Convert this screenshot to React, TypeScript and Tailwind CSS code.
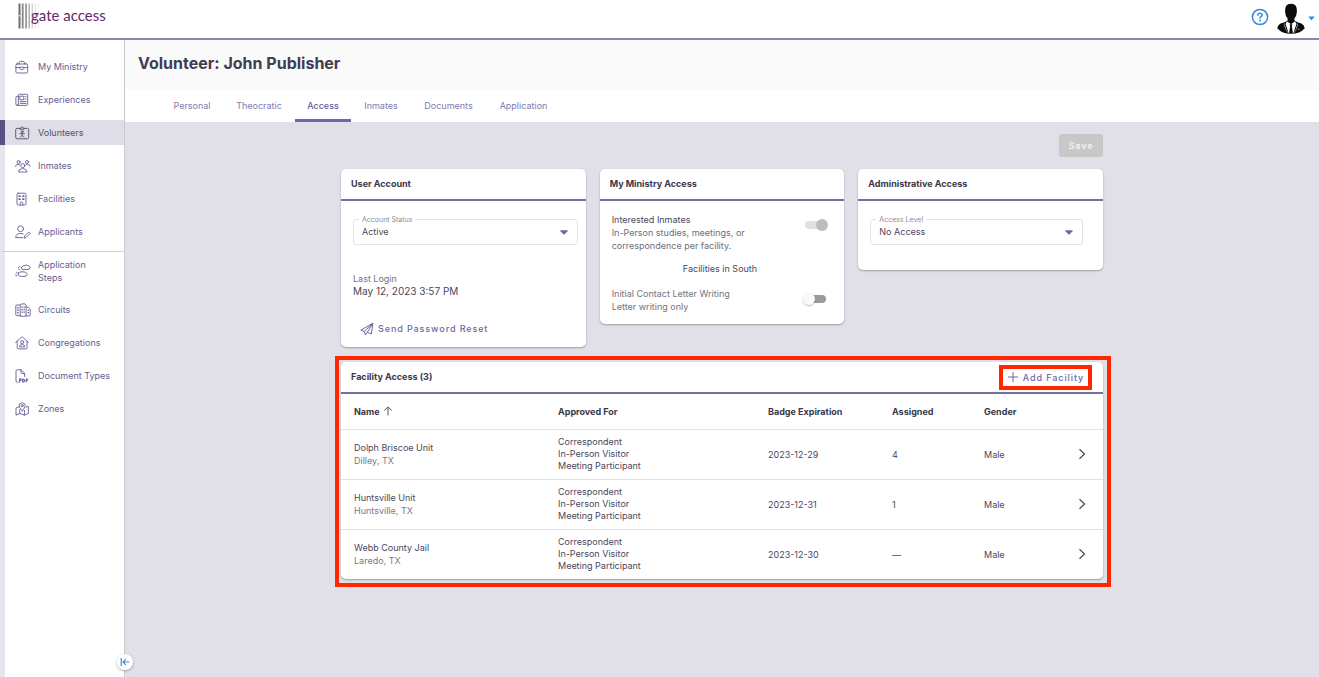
import React from "react";

type IconProps = { children: React.ReactNode };

function Icon({ children }: IconProps) {
  return (
    <svg
      viewBox="0 0 16 16"
      className="size-4 shrink-0"
      fill="none"
      stroke="currentColor"
      strokeWidth="0.9"
      strokeLinecap="round"
      strokeLinejoin="round"
      aria-hidden="true"
    >
      {children}
    </svg>
  );
}

const icons = {
  ministry: (
    <Icon>
      <rect x="0.9" y="5" width="11.8" height="9" rx="1.2" />
      <path d="M4.2 5V3.6Q4.2 2.4 5.4 2.4H8.2Q9.4 2.4 9.4 3.6V5M2.4 5V4.2M11.2 5V4.2M0.9 8.6H4.8M8.8 8.6H12.7M4.8 8.2H8.8V9.3Q8.4 10.8 6.8 10.8Q5.2 10.8 4.8 9.3Z" />
    </Icon>
  ),
  experiences: (
    <Icon>
      <path d="M3.4 12.2V3.2Q3.4 2.3 4.3 2.3H11.8Q12.7 2.3 12.7 3.2V12.2Q12.7 13.4 11.5 13.4H2.3Q0.9 13.4 0.9 12V5.4Q0.9 4.4 1.9 4.4H3.4M2.3 13.4Q3.4 13.4 3.4 12.2" />
      <rect x="5.2" y="4.2" width="3.6" height="3.6" />
      <path d="M10.2 4.6H11M10.2 7H11M5.2 9.6H11M5.2 11.4H11" />
    </Icon>
  ),
  volunteers: (
    <Icon>
      <path d="M5.3 3.4H2Q0.7 3.4 0.7 4.7V12.5Q0.7 13.8 2 13.8H12.4Q13.7 13.8 13.7 12.5V4.7Q13.7 3.4 12.4 3.4H9.1M5.3 4.2H9.1V3.1H8.2Q8 1.9 7.2 1.9Q6.4 1.9 6.2 3.1H5.3Z" />
      <circle cx="7.2" cy="6.7" r="1" />
      <path d="M4.9 8.7H9.5M7.2 8.5V10.3M5.4 12.2L7.2 10.3L9 12.2" />
    </Icon>
  ),
  inmates: (
    <Icon>
      <circle cx="3.6" cy="4" r="1.5" />
      <circle cx="12" cy="4" r="1.5" />
      <circle cx="7.8" cy="7.6" r="2" />
      <path d="M0.5 8.3Q0.8 6.3 3.2 6.3Q4.2 6.3 4.8 6.9M15.1 8.3Q14.8 6.3 12.4 6.3Q11.4 6.3 10.8 6.9M3.5 13.6Q3.8 10.6 7.8 10.6Q11.8 10.6 12.1 13.6Z" />
    </Icon>
  ),
  facilities: (
    <Icon>
      <rect x="2" y="2.2" width="9" height="11.8" rx="1.2" />
      <path d="M5.2 14V12.2Q5.2 10.9 6.5 10.9Q7.8 10.9 7.8 12.2V14" />
      <path strokeWidth="1.4" d="M4.6 5V5.4M8.4 5V5.4M4.6 8V8.4M8.4 8V8.4" />
      <path d="M3.6 5.2H5.6M7.4 5.2H9.4M3.6 8.2H5.6M7.4 8.2H9.4" />
    </Icon>
  ),
  applicants: (
    <Icon>
      <circle cx="5.6" cy="4.8" r="2.9" />
      <path d="M8 13.6H0.7Q0.9 9.4 5.6 9.4Q7 9.4 8 9.9M9.4 13.8L9.8 11.8L13.2 8.4Q14 7.9 14.7 8.5Q15.2 9.2 14.6 9.9L11.3 13.2Z" />
    </Icon>
  ),
  steps: (
    <Icon>
      <path d="M6.4 4.4Q7.6 1.8 11.8 2.1Q15.2 2.7 15.1 4.6Q14.8 6.6 12 6.6Q9.8 6.2 8 6.6Q5.8 6.3 6.4 4.4ZM3.4 4.2Q4.2 3.1 5 3.5M3.6 6.2H4.8M3.2 9.8Q4.4 8.6 8 8.8Q12.2 9 12.1 11.4Q11.7 13.6 9 13.6Q6.8 13 5 13.3Q2.4 12.8 3.2 9.8ZM0.7 10.4Q1.1 9.7 1.8 9.9M0.8 12.6H1.8" />
    </Icon>
  ),
  circuits: (
    <Icon>
      <path d="M5.2 3H1.8Q0.8 3 0.8 4V12.8Q0.8 13.6 1.8 13.6H5.2M5.2 13.9V3.2L6.4 1.9H10L11.1 3.2V13.9ZM11.1 5.2H13.3L15.2 7V13.2Q15.2 13.9 14.4 13.9H11.1" />
      <path strokeDasharray="1.4 1.1" strokeWidth="1.4" strokeLinecap="butt" d="M2.9 5V12M7.1 4.4V12M9.2 4.4V12M13.2 7.4V12.6" />
    </Icon>
  ),
  congregations: (
    <Icon>
      <path d="M0.7 7.4L6.9 2Q7.2 1.8 7.5 2L13.4 7.4M2.2 6.2V12.8Q2.2 13.9 3.3 13.9H11Q12 13.9 12 12.8V6.2" />
      <circle cx="7.1" cy="7.1" r="1.6" />
      <path d="M4.4 11.5Q4.6 9.5 7.1 9.5Q9.6 9.5 9.8 11.5Z" />
    </Icon>
  ),
  documents: (
    <Icon>
      <path d="M3 14.2H2.2Q1 14.2 1 13V3Q1 1.8 2.2 1.8H6.3L9.6 5.3V8.6M6 2V4.6Q6 5.6 7 5.6H9.4" />
      <path strokeWidth="1.1" d="M4.6 14V10.9H5.3Q6.3 11 6.2 11.9Q6 12.7 4.6 12.6M7.7 11V14Q9.6 14 9.5 12.5Q9.5 11 7.7 11M11.2 14V11H12.8M11.2 12.5H12.4" />
    </Icon>
  ),
  zones: (
    <Icon>
      <path d="M3.9 5.8L1 7V14.1L4.8 12.6L9.4 14.1L13.4 12.6V5.3L11 6.1M4.8 12.6V8.6M9.4 14.1V9.4M7.2 9.7Q4.1 6.6 4.1 4.7Q4.2 1.9 7.2 1.8Q10.2 1.9 10.3 4.7Q10.3 6.6 7.2 9.7Z" />
      <circle cx="7.2" cy="4.7" r="1.1" />
    </Icon>
  ),
};

const primaryNav = [
  { label: "My Ministry", icon: icons.ministry },
  { label: "Experiences", icon: icons.experiences },
  { label: "Volunteers", icon: icons.volunteers, active: true },
  { label: "Inmates", icon: icons.inmates },
  { label: "Facilities", icon: icons.facilities },
  { label: "Applicants", icon: icons.applicants },
];

const adminNav = [
  { label: "Circuits", icon: icons.circuits },
  { label: "Congregations", icon: icons.congregations },
  { label: "Document Types", icon: icons.documents },
  { label: "Zones", icon: icons.zones },
];

const tabs = [
  { label: "Personal", width: "w-[62px]" },
  { label: "Theocratic", width: "w-[72px]" },
  { label: "Access", width: "w-[56px]", active: true },
  { label: "Inmates", width: "w-[60px]" },
  { label: "Documents", width: "w-[75px]" },
  { label: "Application", width: "w-[75px]" },
];

const facilities = [
  { name: "Dolph Briscoe Unit", city: "Dilley, TX", badge: "2023-12-29", assigned: "4" },
  { name: "Huntsville Unit", city: "Huntsville, TX", badge: "2023-12-31", assigned: "1" },
  { name: "Webb County Jail", city: "Laredo, TX", badge: "2023-12-30", assigned: "—" },
];

function NavLink({ label, icon, active }: { label: string; icon: React.ReactNode; active?: boolean }) {
  return (
    <a
      href="#"
      aria-current={active ? "page" : undefined}
      className={
        active
          ? "-ml-[5px] flex min-h-[25px] items-center gap-[7px] border-l-[5px] border-[#5d5085] bg-[#dfdde7] pl-[10px] text-[#55506b]"
          : "flex min-h-[25px] items-center gap-[7px] pl-[10px]"
      }
    >
      {icon}
      <span>{label}</span>
    </a>
  );
}

function Card({ title, action, children }: { title: string; action?: React.ReactNode; children: React.ReactNode }) {
  return (
    <section className="rounded-[5px] bg-white shadow-[0_1px_2px_rgba(0,0,0,0.3)]">
      <header className="flex h-8 items-center justify-between border-b-2 border-[#776e9f] pl-[10px]">
        <h2 className="text-[9px] leading-3 font-bold text-[#3a3749]">{title}</h2>
        {action}
      </header>
      {children}
    </section>
  );
}

function SelectField({ id, label, value }: { id: string; label: string; value: string }) {
  return (
    <div className="relative">
      <label htmlFor={id} className="absolute -top-[5px] left-[6px] bg-white px-[3px] text-[7px] leading-[12px] text-[#8d8a9c]">
        {label}
      </label>
      <select
        id={id}
        defaultValue={value}
        className="block h-[26px] w-full appearance-none rounded-[3px] border border-[#e4e4e7] bg-white pb-[2px] pl-2 text-[9px] text-[#4a475c]"
      >
        <option>{value}</option>
      </select>
      <svg viewBox="0 0 8 5" className="pointer-events-none absolute top-[11px] right-[10px] h-[5px] w-2" aria-hidden="true">
        <path d="M0.6 0.3H7.4Q8 0.6 7.5 1.2L4.6 4.3Q4 4.8 3.4 4.3L0.5 1.2Q0 0.6 0.6 0.3Z" fill="#6b68a8" />
      </svg>
    </div>
  );
}

function Toggle({ id, on }: { id: string; on?: boolean }) {
  return (
    <span className="relative mt-[6px] flex h-3 w-[25px] shrink-0 items-center">
      <input id={id} type="checkbox" role="switch" defaultChecked={on} className="absolute inset-0 m-0 opacity-0" />
      <span className={on ? "ml-[2px] h-2 w-5 rounded-full bg-[#e0e0e0]" : "ml-[5px] h-2 w-[18px] rounded-full bg-[#9b9b9b]"} />
      <span
        className={
          on
            ? "absolute right-0 size-3 rounded-full bg-[#bdbdbd]"
            : "absolute left-0 size-3 rounded-full bg-[#fafafa] shadow-[0_1px_2px_rgba(0,0,0,0.25)]"
        }
      />
    </span>
  );
}

function Logo() {
  return (
    <a href="#" className="flex items-start" aria-label="gate access">
      <svg viewBox="0 0 24 26" className="-mr-[11px] h-[26px] w-6" aria-hidden="true">
        <rect x="0.5" y="0.5" width="2" height="25" fill="#6f6f73" />
        <rect x="3.8" y="0.5" width="1.8" height="25" fill="#87878b" />
        <rect x="7.2" y="0.5" width="1.8" height="25" fill="#9a9a9e" />
        <rect x="10.4" y="0.5" width="1.6" height="25" fill="#b4b4b8" />
        <rect x="13.6" y="0.5" width="1.4" height="25" fill="#cfcfd2" />
        <rect x="16.8" y="0.5" width="1.2" height="25" fill="#e4e4e6" />
        <rect x="19.8" y="0.5" width="1" height="25" fill="#f1f1f2" />
        <circle cx="1.4" cy="12.8" r="0.8" fill="#fff" />
      </svg>
      <span className="font-['Lato',sans-serif] text-[15px] leading-[25px] text-[#642a6d]">gate access</span>
    </a>
  );
}

export default function App() {
  return (
    <div className="flex min-h-screen flex-col bg-[#e1dfe8] font-['Inter',sans-serif] text-[9px] leading-[13px] text-[#4a475c]">
      <header className="flex h-10 items-start justify-between border-b-2 border-[#8b86ae] bg-white pr-1 pl-[18px]">
        <div className="pt-[3px]">
          <Logo />
        </div>
        <div className="flex items-start pt-[3px]">
          <button type="button" aria-label="Help" className="mt-[5px] mr-[7px]">
            <svg viewBox="0 0 18 18" className="size-[18px]" fill="none" stroke="#2f8be0" aria-hidden="true">
              <circle cx="9" cy="9" r="7.6" strokeWidth="1.5" />
              <path d="M6.9 7.3Q6.9 5.3 9 5.3Q11.2 5.3 11.1 7.1Q11 8.1 9.9 8.7Q9 9.2 9 10.2" strokeWidth="1.5" strokeLinecap="round" />
              <circle cx="9" cy="12.5" r="0.9" fill="#2f8be0" stroke="none" />
            </svg>
          </button>
          <button type="button" aria-label="Account" className="flex items-center">
            <svg viewBox="0 0 30 31" className="h-[31px] w-[30px]" aria-hidden="true">
              <path d="M9.1 9Q8.4 0.8 15 0.8Q21.6 0.8 20.9 9Q20.6 13 18.4 15.4V17.4Q21 19.4 25.4 20.6Q28 21.8 28.8 25.2Q24 30.7 15 30.7Q6 30.7 1.2 25.2Q2 21.8 4.6 20.6Q9 19.4 11.6 17.4V15.4Q9.4 13 9.1 9Z" fill="#0b0b0d" />
              <path d="M10.9 18.2L15 21.2L19.1 18.2L20.4 21L17.4 30H12.6L9.6 21Z" fill="#fff" />
              <path d="M13.5 21.3H16.5L15.8 23L16.9 30H13.1L14.2 23Z" fill="#0b0b0d" />
              <path d="M8.8 20.4L8.2 23.2L10 24L9 25L12.2 30M21.2 20.4L21.8 23.2L20 24L21 25L17.8 30M21.8 26.3H24" fill="none" stroke="#c9c9cc" strokeWidth="0.6" />
            </svg>
            <svg viewBox="0 0 7 5" className="ml-[2px] h-[5px] w-[7px]" aria-hidden="true">
              <path d="M0.3 0.4H6.7L3.5 4.4Z" fill="#2f8be0" />
            </svg>
          </button>
        </div>
      </header>

      <div className="flex flex-1">
        <aside className="relative w-[125px] shrink-0 border-r border-l-[5px] border-r-[#c9c8cf] border-l-[#e6e5ec] bg-white pt-[14px] text-[#665c92]">
          <nav aria-label="Main">
            <div className="flex flex-col gap-2">
              {primaryNav.map((item) => (
                <NavLink key={item.label} {...item} />
              ))}
            </div>
            <div className="mt-[7px] -ml-[3px] border-t border-[#cfcfd4]" />
            <a href="#" className="mb-[7px] flex h-[38px] items-center gap-[7px] pl-[10px]">
              {icons.steps}
              <span>
                Application
                <br />
                Steps
              </span>
            </a>
            <div className="flex flex-col gap-2">
              {adminNav.map((item) => (
                <NavLink key={item.label} {...item} />
              ))}
            </div>
          </nav>
          <button
            type="button"
            aria-label="Collapse menu"
            className="absolute -right-[9px] bottom-[7px] z-10 flex size-4 items-center justify-center rounded-full bg-white shadow-[0_1px_3px_rgba(0,0,0,0.3)]"
          >
            <svg viewBox="0 0 10 10" className="size-[10px]" fill="none" stroke="#3b8fe0" strokeWidth="1.2" aria-hidden="true">
              <path d="M1.2 1V9M9.4 5H3.2M5.8 2.2L3 5L5.8 7.8" />
            </svg>
          </button>
        </aside>

        <main className="min-w-0 flex-1">
          <div className="h-[50px] bg-[#fafafa] pt-[13px] pl-[13px]">
            <h1 className="text-[16px] leading-[20px] font-bold text-[#3f3d50]">Volunteer: John Publisher</h1>
          </div>
          <nav aria-label="Volunteer sections" className="flex h-8 bg-white pl-9">
            {tabs.map((tab) => (
              <a
                key={tab.label}
                href="#"
                aria-current={tab.active ? "page" : undefined}
                className={`${tab.width} flex items-center justify-center border-b-[3px] pt-[1px] ${
                  tab.active ? "border-[#6b68b0] font-medium text-[#625f9f]" : "border-transparent text-[#7f7cb0]"
                }`}
              >
                {tab.label}
              </a>
            ))}
          </nav>

          <div className="mx-auto max-w-[762px] pt-3">
            <div className="flex justify-end">
              <button type="button" disabled className="h-[23px] w-11 rounded-[3px] bg-[#c8c8c8] font-semibold tracking-widest text-[#f3f3f3]">
                Save
              </button>
            </div>

            <div className="mt-3 grid grid-cols-3 items-start gap-[14px]">
              <Card title="User Account">
                <div className="pt-[18px] pr-2 pb-[6px] pl-3">
                  <SelectField id="account-status" label="Account Status" value="Active" />
                  <dl className="mt-[27px]">
                    <dt className="text-[#75737d]">Last Login</dt>
                    <dd className="text-[10px] leading-3">May 12, 2023 3:57 PM</dd>
                  </dl>
                  <button type="button" className="mt-[19px] ml-[7px] flex h-[25px] items-center gap-1 font-medium tracking-widest text-[#6b68a5]">
                    <svg viewBox="0 0 14 14" className="size-[14px]" fill="none" stroke="currentColor" strokeLinejoin="round" aria-hidden="true">
                      <path d="M0.8 8.2L12.9 1.2L11.3 12L7.3 10.2L5.5 12.9L4.3 9.4ZM4.3 9.4L12.9 1.2L7.3 10.2" />
                    </svg>
                    Send Password Reset
                  </button>
                </div>
              </Card>

              <Card title="My Ministry Access">
                <div className="pt-3 pr-4 pb-[11px] pl-3">
                  <div className="flex items-start justify-between">
                    <label htmlFor="interested-inmates" className="text-[#6f6d78]">
                      <span className="text-[#4a475c]">Interested Inmates</span>
                      <br />
                      In-Person studies, meetings, or
                      <br />
                      correspondence per facility.
                    </label>
                    <Toggle id="interested-inmates" on />
                  </div>
                  <p className="mt-[10px] text-center">Facilities in South</p>
                  <div className="mt-3 flex items-start justify-between">
                    <label htmlFor="letter-writing" className="text-[#75737d]">
                      Initial Contact Letter Writing
                      <br />
                      Letter writing only
                    </label>
                    <Toggle id="letter-writing" />
                  </div>
                </div>
              </Card>

              <Card title="Administrative Access">
                <div className="pt-[18px] pr-5 pb-[25px] pl-3">
                  <SelectField id="access-level" label="Access Level" value="No Access" />
                </div>
              </Card>
            </div>

            <div className="relative mt-[15px]">
              <Card
                title="Facility Access (3)"
                action={
                  <button
                    type="button"
                    className="mr-[11px] flex h-[25px] w-[93px] items-center justify-center gap-1 border-4 border-[#ff2600] font-medium tracking-widest text-[#6b68a5]"
                  >
                    <svg viewBox="0 0 12 12" className="size-3 shrink-0" fill="none" stroke="currentColor" aria-hidden="true">
                      <path d="M6 1V11M1 6H11" />
                    </svg>
                    <span className="whitespace-nowrap">Add Facility</span>
                  </button>
                }
              >
                <table className="w-full table-fixed border-collapse text-left">
                  <colgroup>
                    <col className="w-[217px]" />
                    <col className="w-[210px]" />
                    <col className="w-[124px]" />
                    <col className="w-[92px]" />
                    <col />
                    <col className="w-[25px]" />
                  </colgroup>
                  <thead>
                    <tr className="h-[35px] text-[#3a3749]">
                      <th className="pl-[13px] font-bold">
                        <span className="flex items-center gap-[3px]">
                          Name
                          <svg viewBox="0 0 10 10" className="size-[10px]" fill="none" stroke="#5a5868" aria-hidden="true">
                            <path d="M5 9.4V1M1.2 4.6L5 0.9L8.8 4.6" />
                          </svg>
                        </span>
                      </th>
                      <th className="font-bold">Approved For</th>
                      <th className="font-bold">Badge Expiration</th>
                      <th className="font-bold">Assigned</th>
                      <th className="font-bold">Gender</th>
                      <th aria-label="Open" />
                    </tr>
                  </thead>
                  <tbody>
                    {facilities.map((row) => (
                      <tr key={row.name} className="h-[50px] border-t border-[#e2e2e6]">
                        <td className="pl-[13px]">
                          <div>{row.name}</div>
                          <div className="text-[#7b7983]">{row.city}</div>
                        </td>
                        <td className="leading-3">
                          Correspondent
                          <br />
                          In-Person Visitor
                          <br />
                          Meeting Participant
                        </td>
                        <td>{row.badge}</td>
                        <td>{row.assigned}</td>
                        <td>Male</td>
                        <td>
                          <button type="button" aria-label={`Open ${row.name}`} className="flex">
                            <svg viewBox="0 0 8 12" className="h-3 w-2" fill="none" stroke="#4a475c" strokeWidth="1.2" aria-hidden="true">
                              <path d="M1.5 1.2L6.5 6L1.5 10.8" />
                            </svg>
                          </button>
                        </td>
                      </tr>
                    ))}
                  </tbody>
                </table>
              </Card>
              <div className="pointer-events-none absolute -top-[6px] -right-2 -bottom-2 -left-[6px] border-4 border-[#ff2600]" aria-hidden="true" />
            </div>
          </div>
        </main>
      </div>
    </div>
  );
}
